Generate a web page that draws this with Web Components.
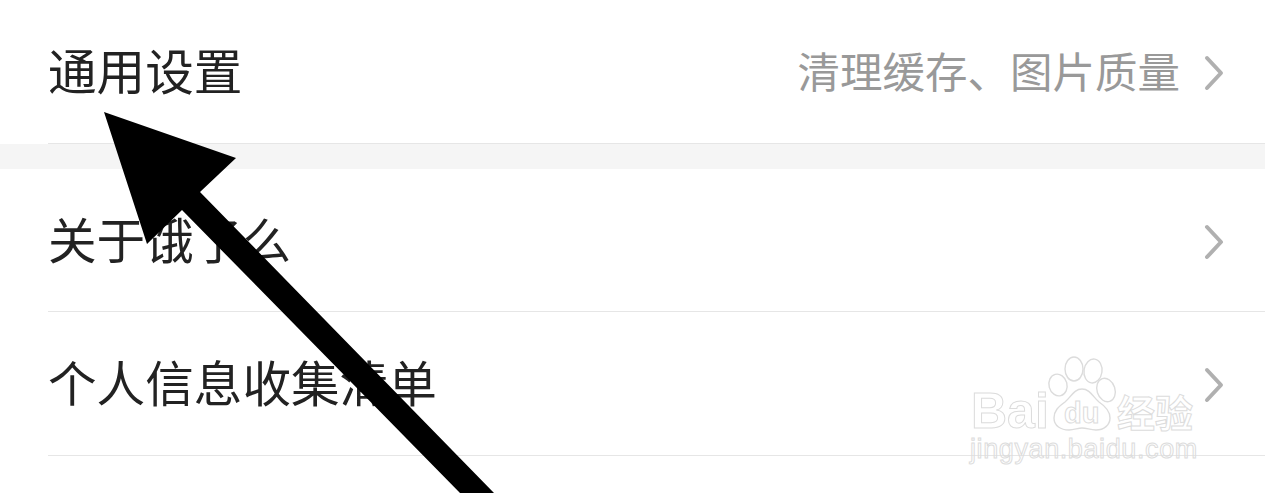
<!DOCTYPE html>
<html lang="zh">
<head>
<meta charset="utf-8">
<title>设置</title>
<style>
  html, body { margin: 0; height: 100%; background: #fff; overflow: hidden; }
  body { position: relative; font-family: "Noto Sans CJK SC", "Noto Sans", sans-serif; }
</style>
</head>
<body>
<settings-page>
  <settings-row height="144">通用设置<span slot="hint">清理缓存、图片质量</span></settings-row>
  <settings-gap></settings-gap>
  <settings-row height="143">关于饿了么</settings-row>
  <settings-row height="144">个人信息收集清单</settings-row>
</settings-page>
<baidu-mark></baidu-mark>
<pointer-arrow></pointer-arrow>

<script>
// 设置列表外层
class SettingsPage extends HTMLElement {
  constructor() {
    super();
    this.attachShadow({ mode: 'open' });
    this.shadowRoot.innerHTML = `
      <style>
        :host { display: flex; flex-direction: column; width: 100%; background: #fff; }
      </style>
      <slot></slot>
    `;
  }
}

// 单行：左边标题，右边提示 + 箭头
class SettingsRow extends HTMLElement {
  constructor() {
    super();
    this.attachShadow({ mode: 'open' });
    this.shadowRoot.innerHTML = `
      <style>
        :host {
          display: block;
          padding-left: 48px;
          box-sizing: border-box;
          flex-shrink: 0;
        }
        .row {
          height: 100%;
          box-sizing: border-box;
          display: flex;
          align-items: center;
          justify-content: space-between;
          padding-right: 41px;
          border-bottom: 1px solid #e6e6e6;
        }
        .label { font-size: 48.6px; line-height: 60px; padding-bottom: 5px; color: #222; }
        .right { display: flex; align-items: center; gap: 24px; }
        .hint { font-size: 42.5px; line-height: 60px; padding-bottom: 3px; color: #999; }
        svg { display: block; margin-top: 3px; }
      </style>
      <div class="row">
        <div class="label"><slot></slot></div>
        <div class="right">
          <div class="hint"><slot name="hint"></slot></div>
          <svg width="20" height="36" viewBox="0 0 20 36" fill="none" stroke="#b0b0b0" stroke-width="4" stroke-linecap="round" stroke-linejoin="round">
            <path d="M3 3 L17 18 L3 33"/>
          </svg>
        </div>
      </div>
    `;
  }
  connectedCallback() {
    this.style.height = this.getAttribute('height') + 'px';
  }
}

// 分组之间的灰条
class SettingsGap extends HTMLElement {
  constructor() {
    super();
    this.attachShadow({ mode: 'open' });
    this.shadowRoot.innerHTML = `
      <style>
        :host { display: block; height: 25px; background: #f5f5f5; flex-shrink: 0; }
      </style>
    `;
  }
}

// 百度经验水印，盖在列表上面
class BaiduMark extends HTMLElement {
  constructor() {
    super();
    this.attachShadow({ mode: 'open' });
    this.shadowRoot.innerHTML = `
      <style>
        :host { position: absolute; left: 960px; top: 350px; width: 245px; height: 125px; pointer-events: none; }
        svg { display: block; }
        text { fill: none; stroke: #dcdcdc; stroke-width: 1; }
        .latin { font-family: "Liberation Sans", sans-serif; }
        .cjk { font-family: "Noto Sans CJK SC", sans-serif; font-weight: 700; }
      </style>
      <svg width="245" height="125" viewBox="960 350 245 125">
        <g fill="none" stroke="#dcdcdc" stroke-width="1.4">
          <ellipse cx="1058" cy="385" rx="9" ry="11" transform="rotate(-15 1058 385)"/>
          <ellipse cx="1074" cy="369" rx="9" ry="12"/>
          <ellipse cx="1093" cy="371" rx="9" ry="12" transform="rotate(8 1093 371)"/>
          <ellipse cx="1106" cy="390" rx="9" ry="12" transform="rotate(-18 1106 390)"/>
          <path d="M1082 389 C1074 389 1071 397 1065 402 C1058 407 1054 411 1054 418 C1054 426 1061 430 1069 430 C1074 430 1078 428 1082 428 C1087 428 1090 430 1096 430 C1104 430 1110 425 1110 418 C1110 411 1105 406 1099 402 C1093 397 1090 389 1082 389 Z"/>
        </g>
        <text class="latin" x="971" y="428" font-size="50" font-weight="700">Bai</text>
        <text class="latin" x="1064" y="423" font-size="29" font-weight="700">du</text>
        <text class="cjk" x="1117" y="427" font-size="38">经验</text>
        <text class="latin" x="970" y="458" font-size="27" letter-spacing="0.6">jingyan.baidu.com</text>
      </svg>
    `;
  }
}

// 黑色大箭头，标注用
class PointerArrow extends HTMLElement {
  constructor() {
    super();
    this.attachShadow({ mode: 'open' });
    this.shadowRoot.innerHTML = `
      <style>
        :host { position: absolute; left: 0; top: 0; width: 1265px; height: 493px; pointer-events: none; }
        svg { display: block; }
      </style>
      <svg width="1265" height="493" viewBox="0 0 1265 493">
        <polygon fill="#000" points="104,112 236,158 200,192 494,493 460,493 182,210 147,244"/>
      </svg>
    `;
  }
}

customElements.define('settings-page', SettingsPage);
customElements.define('settings-row', SettingsRow);
customElements.define('settings-gap', SettingsGap);
customElements.define('baidu-mark', BaiduMark);
customElements.define('pointer-arrow', PointerArrow);
</script>
</body>
</html>
